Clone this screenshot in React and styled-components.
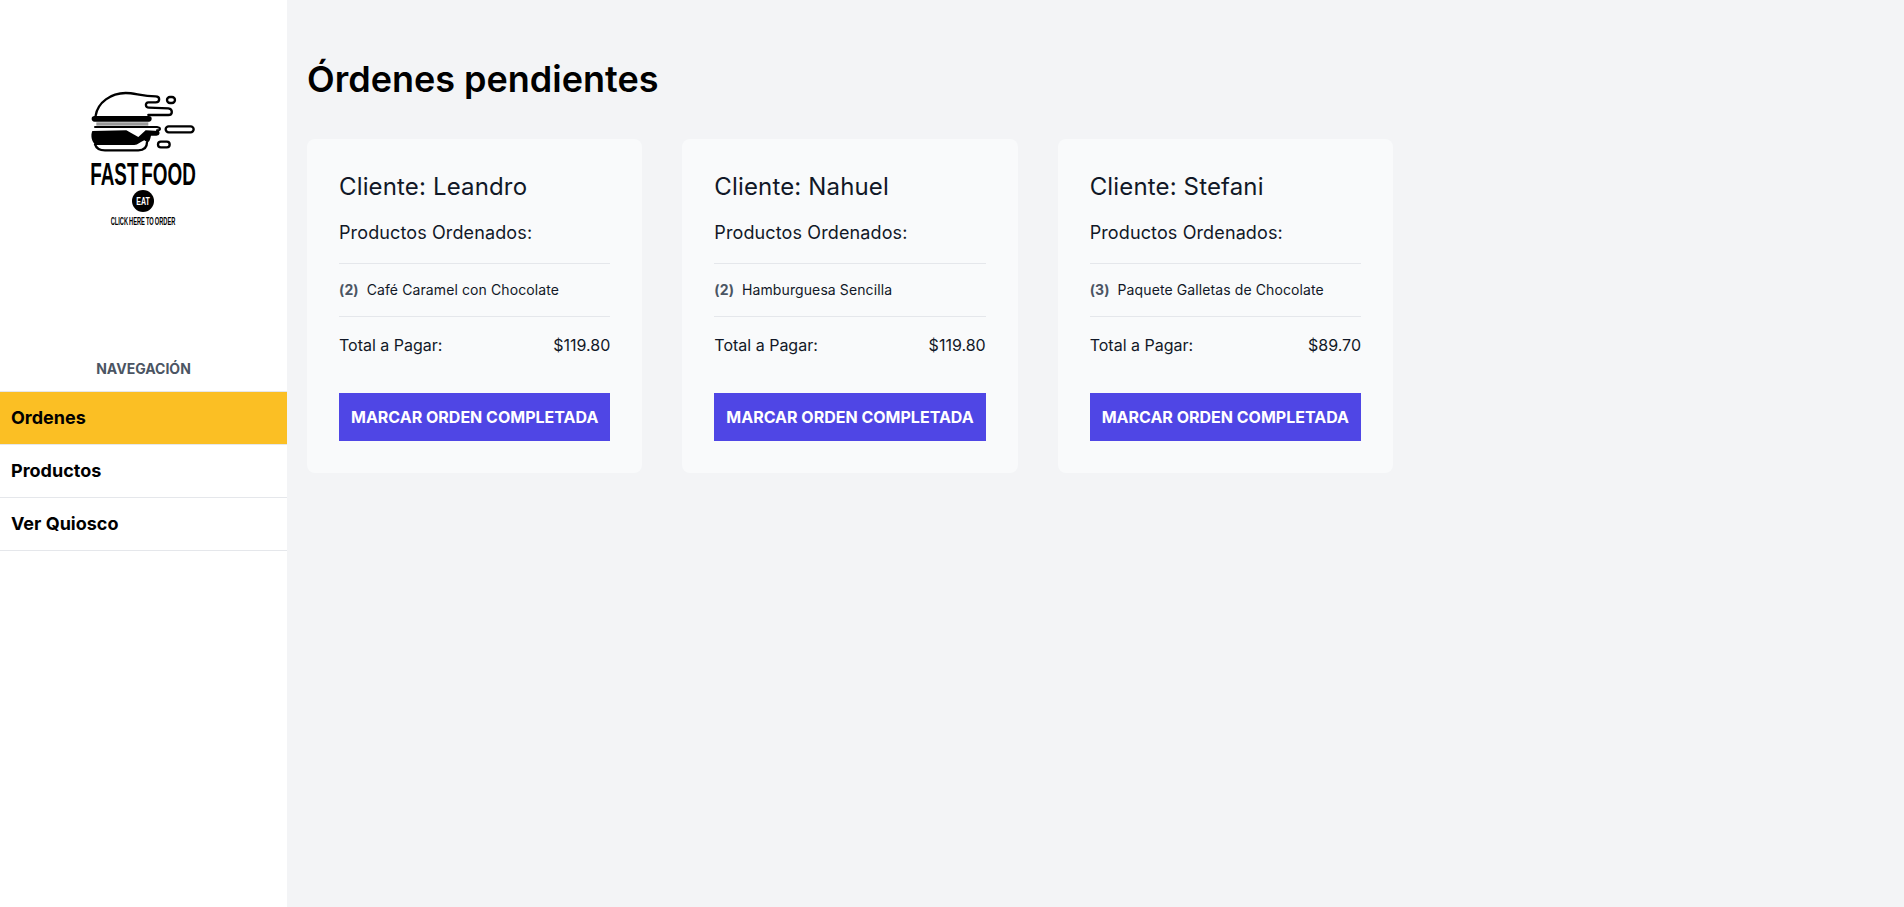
import React from 'react'
import styled, { createGlobalStyle } from 'styled-components'

const orders = [
  { id: 1, client: 'Leandro', qty: 2, product: 'Café Caramel con Chocolate', total: '$119.80' },
  { id: 2, client: 'Nahuel', qty: 2, product: 'Hamburguesa Sencilla', total: '$119.80' },
  { id: 3, client: 'Stefani', qty: 3, product: 'Paquete Galletas de Chocolate', total: '$89.70' },
]

const links = [
  { name: 'Ordenes', active: true },
  { name: 'Productos' },
  { name: 'Ver Quiosco' },
]

const Logo = () => (
  <LogoSvg viewBox="0 0 170 170" aria-label="Fast Food">
    <g transform="translate(25 15) scale(0.3333)">
      <g fill="none" stroke="#000" strokeWidth="7" strokeLinecap="round" strokeLinejoin="round">
        <path d="M32 92 C38 52 78 24 122 24 C150 24 170 34 212 34 C226 34 226 52 212 52 L190 52 C180 52 180 68 192 68 L250 70 C264 72 264 90 250 90 L190 90" />
        <rect x="246" y="36" width="24" height="18" rx="9" />
        <rect x="242" y="124" width="84" height="18" rx="9" />
        <rect x="219" y="170" width="35" height="17" rx="8.5" />
        <path d="M30 126 L216 126 C228 128 228 136 216 136" strokeWidth="6" />
        <path d="M30 178 C34 190 46 196 60 196 L160 196 C176 196 186 188 186 172" />
      </g>
      <rect x="20" y="93" width="180" height="17" rx="8.5" fill="#000" />
      <rect x="34" y="112" width="156" height="10" fill="#999" />
      <path d="M22 138 L124 136 L160 156 L182 136 L222 138 C226 146 222 152 214 152 L198 152 C194 172 190 176 178 166 C168 170 158 180 148 180 L34 180 C20 174 16 150 22 138 Z" fill="#000" />
    </g>
    <LogoTitle transform="translate(83 115) scale(0.59 1)">FAST FOOD</LogoTitle>
    <circle cx="83" cy="131" r="11" fill="#000" />
    <LogoBadge transform="translate(83 135) scale(0.64 1)">EAT</LogoBadge>
    <LogoCaption transform="translate(83 155) scale(0.57 1)">CLICK HERE TO ORDER</LogoCaption>
  </LogoSvg>
)

const App = () => (
  <>
    <GlobalStyle />
    <Layout>
      <Sidebar>
        <LogoWrap>
          <Logo />
        </LogoWrap>
        <NavTitle>Navegación</NavTitle>
        <Nav>
          {links.map(link => (
            <NavItem key={link.name} $active={link.active}>{link.name}</NavItem>
          ))}
        </Nav>
      </Sidebar>
      <Main>
        <Title>Órdenes pendientes</Title>
        <Grid>
          {orders.map(order => (
            <Card key={order.id}>
              <Client>Cliente: {order.client}</Client>
              <Subtitle>Productos Ordenados:</Subtitle>
              <Items>
                <Item>
                  <Qty>({order.qty})</Qty>
                  <span>{order.product}</span>
                </Item>
              </Items>
              <TotalRow>
                <span>Total a Pagar:</span>
                <span>{order.total}</span>
              </TotalRow>
              <CompleteButton type="button">Marcar orden completada</CompleteButton>
            </Card>
          ))}
        </Grid>
      </Main>
    </Layout>
  </>
)

export default App

const GlobalStyle = createGlobalStyle`
  * {
    box-sizing: border-box;
  }
  body {
    margin: 0;
    background: #f3f4f6;
    font-family: Inter, "Liberation Sans", sans-serif;
    color: #000;
  }
`
const Layout = styled.div`
  display: flex;
  min-height: 907px;
`
const Sidebar = styled.aside`
  width: 287px;
  flex-shrink: 0;
  background: #fff;
`
const LogoWrap = styled.div`
  display: flex;
  justify-content: center;
  padding: 70px 0 0 3px;
`
const LogoSvg = styled.svg`
  display: block;
  width: 170px;
  height: 170px;
`
const LogoTitle = styled.text`
  font-family: "Liberation Sans Narrow", "Liberation Sans", sans-serif;
  font-size: 32px;
  font-weight: 700;
  text-anchor: middle;
  word-spacing: -4px;
`
const LogoBadge = styled.text`
  font-family: "Liberation Sans Narrow", "Liberation Sans", sans-serif;
  font-size: 11px;
  font-weight: 700;
  text-anchor: middle;
  fill: #fff;
`
const LogoCaption = styled.text`
  font-family: "Liberation Sans Narrow", "Liberation Sans", sans-serif;
  font-size: 10px;
  font-weight: 700;
  text-anchor: middle;
  word-spacing: -1px;
`
const NavTitle = styled.h2`
  margin: 119px 0 0;
  text-align: center;
  font-size: 14px;
  line-height: 20px;
  font-weight: 700;
  text-transform: uppercase;
  color: #4b5563;
`
const Nav = styled.nav`
  margin-top: 12px;
`
const NavItem = styled.a`
  display: block;
  height: 53px;
  padding: 0 11px;
  font-size: 18px;
  line-height: 52px;
  font-weight: 700;
  border-top: 1px solid #e5e7eb;
  background: ${props => (props.$active ? '#fbbf24' : 'transparent')};
  &:last-child {
    height: 54px;
    border-bottom: 1px solid #e5e7eb;
  }
`
const Main = styled.main`
  flex: 1;
  padding: 59px 20px 0;
`
const Title = styled.h1`
  margin: 0;
  font-size: 36px;
  line-height: 40px;
  font-weight: 600;
`
const Grid = styled.div`
  display: flex;
  gap: 40px;
  margin-top: 40px;
`
const Card = styled.article`
  width: 335.33px;
  padding: 32px;
  border-radius: 8px;
  background: #f9fafb;
  color: #111827;
`
const Client = styled.h3`
  margin: 0;
  font-size: 24px;
  line-height: 32px;
  font-weight: 400;
  letter-spacing: 0.15px;
`
const Subtitle = styled.h4`
  margin: 16px 0 0;
  font-size: 18px;
  line-height: 28px;
  font-weight: 400;
  letter-spacing: 0.12px;
`
const Items = styled.div`
  margin-top: 16px;
  border-top: 1px solid #e5e7eb;
  border-bottom: 1px solid #e5e7eb;
`
const Item = styled.div`
  display: flex;
  align-items: center;
  gap: 8px;
  height: 52px;
  padding-bottom: 1px;
  font-size: 14px;
  letter-spacing: 0.1px;
`
const Qty = styled.span`
  font-weight: 700;
  color: #4b5563;
`
const TotalRow = styled.div`
  display: flex;
  justify-content: space-between;
  margin-top: 16px;
  font-size: 16px;
  line-height: 24px;
`
const CompleteButton = styled.button`
  display: block;
  width: 100%;
  height: 48px;
  margin-top: 36px;
  border: 0;
  padding: 0;
  background: #4f46e5;
  color: #fff;
  font-family: inherit;
  font-size: 16px;
  font-weight: 700;
  text-transform: uppercase;
`
